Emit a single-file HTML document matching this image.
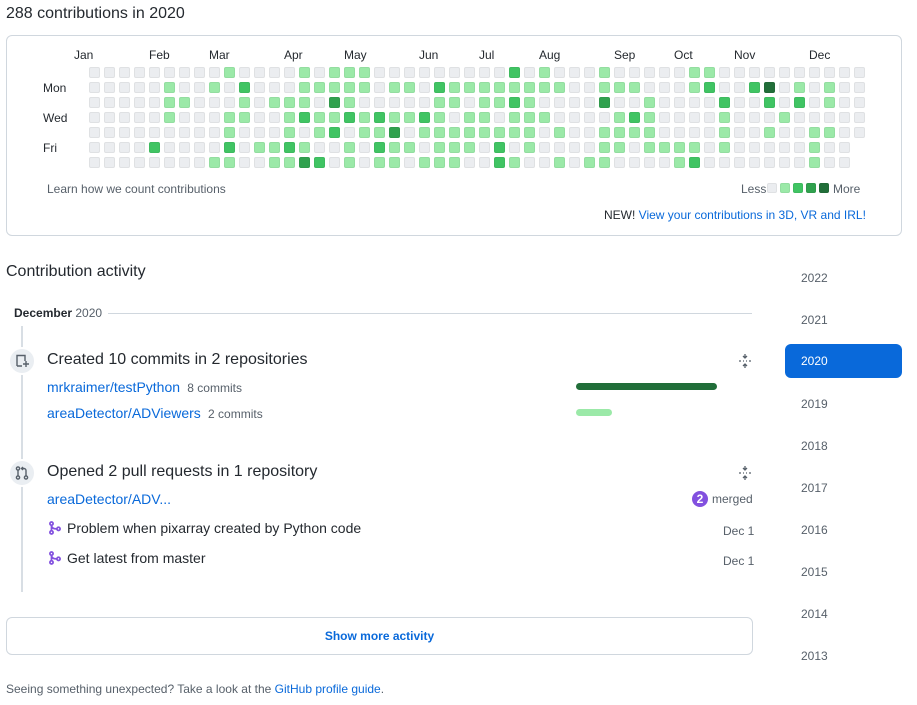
<!DOCTYPE html>
<html><head><meta charset="utf-8"><style>
*{box-sizing:border-box}
body{margin:0;width:917px;height:705px;background:#fff;font-family:"Liberation Sans",sans-serif;color:#24292f;position:relative;overflow:hidden}
.a{position:absolute;white-space:nowrap}
.box{position:absolute;left:6px;top:35px;width:896px;height:201px;border:1px solid #d0d7de;border-radius:6px}
.c{position:absolute;width:11px;height:11px;border-radius:2px;outline:1px solid rgba(27,31,35,0.06);outline-offset:-1px}
.l0{background:#ebedf0}.l1{background:#9be9a8}.l2{background:#40c463}.l3{background:#30a14e}.l4{background:#216e39}
.sm{font-size:12px;color:#24292f}
.mu{color:#57606a}
.lk{color:#0969da}
.yr{position:absolute;left:785px;width:117px;height:34px;border-radius:6px;font-size:12px;color:#57606a;padding:10px 0 0 16px}
.ic{position:absolute;width:28px;height:28px;border-radius:50%;background:#eaeef2;border:2px solid #fff}
</style></head><body>
<div class="a" style="left:6px;top:5px;font-size:16px">288 contributions in 2020</div>
<div class="box"></div>
<div id="g"></div>
<div class="a sm" style="left:74px;top:48px">Jan</div>
<div class="a sm" style="left:149px;top:48px">Feb</div>
<div class="a sm" style="left:209px;top:48px">Mar</div>
<div class="a sm" style="left:284px;top:48px">Apr</div>
<div class="a sm" style="left:344px;top:48px">May</div>
<div class="a sm" style="left:419px;top:48px">Jun</div>
<div class="a sm" style="left:479px;top:48px">Jul</div>
<div class="a sm" style="left:539px;top:48px">Aug</div>
<div class="a sm" style="left:614px;top:48px">Sep</div>
<div class="a sm" style="left:674px;top:48px">Oct</div>
<div class="a sm" style="left:734px;top:48px">Nov</div>
<div class="a sm" style="left:809px;top:48px">Dec</div>
<div class="a sm" style="left:43px;top:81px">Mon</div>
<div class="a sm" style="left:43px;top:111px">Wed</div>
<div class="a sm" style="left:43px;top:141px">Fri</div>
<div class="a sm mu" style="left:47px;top:182px">Learn how we count contributions</div>
<div class="a sm mu" style="left:741px;top:182px">Less</div>
<div class="c l0" style="left:767px;top:183px;width:10px;height:10px"></div><div class="c l1" style="left:780px;top:183px;width:10px;height:10px"></div><div class="c l2" style="left:793px;top:183px;width:10px;height:10px"></div><div class="c l3" style="left:806px;top:183px;width:10px;height:10px"></div><div class="c l4" style="left:819px;top:183px;width:10px;height:10px"></div>
<div class="a sm mu" style="left:833px;top:182px">More</div>
<div class="a sm" style="left:604px;top:208px">NEW! <span class="lk">View your contributions in 3D, VR and IRL!</span></div>

<div class="a" style="left:6px;top:263px;font-size:16px">Contribution activity</div>
<div class="yr" style="top:261px">2022</div>
<div class="yr" style="top:303px">2021</div>
<div class="yr" style="top:344px;background:#0969da;color:#fff">2020</div>
<div class="yr" style="top:387px">2019</div>
<div class="yr" style="top:429px">2018</div>
<div class="yr" style="top:471px">2017</div>
<div class="yr" style="top:513px">2016</div>
<div class="yr" style="top:555px">2015</div>
<div class="yr" style="top:597px">2014</div>
<div class="yr" style="top:639px">2013</div>

<div class="a" style="left:14px;top:306px;font-size:12px;font-weight:bold">December <span style="font-weight:normal;color:#57606a">2020</span></div>
<div class="a" style="left:108px;top:313px;width:644px;height:1px;background:#d0d7de"></div>
<div class="a" style="left:21px;top:326px;width:2px;height:266px;background:#d8dee4"></div>

<div class="ic" style="left:8px;top:347px"></div>
<svg class="a" style="left:14px;top:353px" width="16" height="16" viewBox="0 0 16 16" fill="none" stroke="#57606a" stroke-width="1.4"><path d="M3 13V2.5h8V8M3 13h5M9 11h6M12 8v6"/></svg>
<div class="a" style="left:47px;top:351px;font-size:16px">Created 10 commits in 2 repositories</div>
<svg class="a" style="left:737px;top:353px" width="16" height="16" viewBox="0 0 16 16" stroke="#57606a" stroke-width="1.3" fill="none"><path d="M8 1v4M6 3l2 2 2-2M8 15v-4M6 13l2-2 2 2M2 8h2M6 8h1M9 8h1M12 8h2"/></svg>
<div class="a" style="left:47px;top:379px;font-size:14px"><span class="lk">mrkraimer/testPython</span> <span style="font-size:12px;color:#57606a">&nbsp;8 commits</span></div>
<div class="a" style="left:47px;top:405px;font-size:14px"><span class="lk">areaDetector/ADViewers</span> <span style="font-size:12px;color:#57606a">&nbsp;2 commits</span></div>
<div class="a" style="left:576px;top:383px;width:141px;height:7px;border-radius:4px;background:#216e39"></div>
<div class="a" style="left:576px;top:409px;width:36px;height:7px;border-radius:4px;background:#9be9a8"></div>

<div class="ic" style="left:8px;top:459px"></div>
<svg class="a" style="left:14px;top:465px" width="16" height="16" viewBox="0 0 16 16" fill="none" stroke="#57606a" stroke-width="1.4"><circle cx="4" cy="3.5" r="1.6"/><circle cx="4" cy="12.5" r="1.6"/><circle cx="12" cy="12.5" r="1.6"/><path d="M4 5v6M12 11V5.5a2 2 0 0 0-2-2H7.5M9 2l-1.5 1.5L9 5"/></svg>
<div class="a" style="left:47px;top:463px;font-size:16px">Opened 2 pull requests in 1 repository</div>
<svg class="a" style="left:737px;top:465px" width="16" height="16" viewBox="0 0 16 16" stroke="#57606a" stroke-width="1.3" fill="none"><path d="M8 1v4M6 3l2 2 2-2M8 15v-4M6 13l2-2 2 2M2 8h2M6 8h1M9 8h1M12 8h2"/></svg>
<div class="a lk" style="left:47px;top:491px;font-size:14px">areaDetector/ADV...</div>
<div class="a" style="left:692px;top:491px;width:16px;height:16px;border-radius:50%;background:#8250df;color:#fff;font-size:12px;font-weight:bold;text-align:center;line-height:16px">2</div>
<div class="a sm mu" style="left:712px;top:492px">merged</div>
<svg class="a" style="left:48px;top:521px" width="14" height="14" viewBox="0 0 16 16" fill="none" stroke="#8250df" stroke-width="2"><circle cx="4" cy="3" r="1.8"/><circle cx="4" cy="13" r="1.8"/><circle cx="12" cy="9" r="1.8"/><path d="M4 5v6M4 5c0 4 4 4 6 4"/></svg>
<div class="a" style="left:67px;top:520px;font-size:14px">Problem when pixarray created by Python code</div>
<div class="a sm mu" style="left:723px;top:524px">Dec 1</div>
<svg class="a" style="left:48px;top:551px" width="14" height="14" viewBox="0 0 16 16" fill="none" stroke="#8250df" stroke-width="2"><circle cx="4" cy="3" r="1.8"/><circle cx="4" cy="13" r="1.8"/><circle cx="12" cy="9" r="1.8"/><path d="M4 5v6M4 5c0 4 4 4 6 4"/></svg>
<div class="a" style="left:67px;top:550px;font-size:14px">Get latest from master</div>
<div class="a sm mu" style="left:723px;top:554px">Dec 1</div>

<div class="a" style="left:6px;top:617px;width:747px;height:38px;border:1px solid #d0d7de;border-radius:6px;text-align:center;font-size:12px;font-weight:bold;color:#0969da;line-height:36px">Show more activity</div>
<div class="a sm mu" style="left:6px;top:682px">Seeing something unexpected? Take a look at the <span class="lk">GitHub profile guide</span>.</div>

<script>
var R=[
{9:1,14:1,16:1,17:1,18:1,28:2,30:1,34:1,40:1,41:1},
{5:1,8:1,10:2,14:1,15:1,16:1,17:1,18:1,20:1,21:1,23:2,24:1,25:1,26:1,27:1,28:1,29:1,30:1,31:1,34:1,35:1,36:1,40:1,41:2,44:2,45:4,47:1,49:1},
{5:1,6:1,10:1,12:1,13:1,14:1,16:3,17:1,23:1,24:1,26:1,27:1,28:2,29:1,34:3,37:1,42:2,45:2,47:2,49:1},
{5:1,9:1,10:1,13:1,14:2,15:1,16:1,17:2,18:1,19:2,20:1,21:1,22:2,23:1,25:1,26:1,28:1,29:1,30:1,35:1,36:2,37:1,42:1,46:1},
{9:1,13:1,15:1,16:2,18:1,19:1,20:3,22:1,23:1,24:1,25:1,26:1,27:1,28:1,29:1,31:1,34:1,35:1,36:1,37:1,42:1,45:1,48:1,49:1},
{4:2,9:2,11:1,12:1,13:2,14:1,17:1,19:2,20:1,21:1,23:1,24:1,25:1,27:2,29:1,34:1,35:1,37:1,38:1,39:1,40:1,42:1,48:1},
{8:1,9:1,12:1,13:1,14:3,15:2,17:1,19:1,20:1,22:1,23:1,24:1,27:2,28:1,31:1,33:1,34:1,39:1,40:2,48:1}];
var h='';
for(var r=0;r<7;r++){var n=r>4?51:52;for(var c=0;c<n;c++){var v=R[r][c]||0;h+='<div class="c l'+v+'" style="left:'+(89+c*15)+'px;top:'+(67+r*15)+'px"></div>';}}
document.getElementById('g').innerHTML=h;
</script>
</body></html>
